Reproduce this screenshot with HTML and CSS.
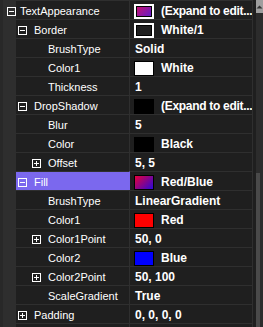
FILE: index.html
```html
<!DOCTYPE html>
<html lang="en">

<head>
    <meta charset="UTF-8">
    <meta name="viewport" content="width=device-width, initial-scale=1.0">
    <title>Property Grid</title>
    <link rel="stylesheet" href="styles.css">
</head>

<body>
    <div class="pane">
        <div class="list">
            <div class="row">
                <div class="gutter"><svg class="exp" width="9" height="9"><rect x="0.5" y="0.5" width="8" height="8" fill="none" stroke="#fff"/><path d="M2 4.5h5" stroke="#fff"/></svg></div>
                <div class="name l0">TextAppearance</div>
                <div class="value"><span class="sw frame grad-a"></span><span class="txt tight">(Expand to edit...</span></div>
            </div>
            <div class="row">
                <div class="gutter"></div>
                <div class="name l1"><svg class="exp" width="9" height="9"><rect x="0.5" y="0.5" width="8" height="8" fill="none" stroke="#fff"/><path d="M2 4.5h5" stroke="#fff"/></svg>Border</div>
                <div class="value"><span class="sw frame dark"></span><span class="txt">White/1</span></div>
            </div>
            <div class="row">
                <div class="gutter"></div>
                <div class="name l2">BrushType</div>
                <div class="value plain">Solid</div>
            </div>
            <div class="row">
                <div class="gutter"></div>
                <div class="name l2">Color1</div>
                <div class="value"><span class="sw white"></span><span class="txt">White</span></div>
            </div>
            <div class="row">
                <div class="gutter"></div>
                <div class="name l2">Thickness</div>
                <div class="value plain">1</div>
            </div>
            <div class="row">
                <div class="gutter"></div>
                <div class="name l1"><svg class="exp" width="9" height="9"><rect x="0.5" y="0.5" width="8" height="8" fill="none" stroke="#fff"/><path d="M2 4.5h5" stroke="#fff"/></svg>DropShadow</div>
                <div class="value"><span class="sw black"></span><span class="txt tight">(Expand to edit...</span></div>
            </div>
            <div class="row">
                <div class="gutter"></div>
                <div class="name l2">Blur</div>
                <div class="value plain">5</div>
            </div>
            <div class="row">
                <div class="gutter"></div>
                <div class="name l2">Color</div>
                <div class="value"><span class="sw black"></span><span class="txt">Black</span></div>
            </div>
            <div class="row">
                <div class="gutter"></div>
                <div class="name l2"><svg class="exp" width="9" height="9"><rect x="0.5" y="0.5" width="8" height="8" fill="none" stroke="#fff"/><path d="M2 4.5h5M4.5 2v5" stroke="#fff"/></svg>Offset</div>
                <div class="value plain">5, 5</div>
            </div>
            <div class="row selected">
                <div class="gutter"></div>
                <div class="name l1"><svg class="exp" width="9" height="9"><rect x="0.5" y="0.5" width="8" height="8" fill="none" stroke="#fff"/><path d="M2 4.5h5" stroke="#fff"/></svg>Fill</div>
                <div class="value"><span class="sw grad-b"></span><span class="txt">Red/Blue</span></div>
            </div>
            <div class="row">
                <div class="gutter"></div>
                <div class="name l2">BrushType</div>
                <div class="value plain">LinearGradient</div>
            </div>
            <div class="row">
                <div class="gutter"></div>
                <div class="name l2">Color1</div>
                <div class="value"><span class="sw red"></span><span class="txt">Red</span></div>
            </div>
            <div class="row">
                <div class="gutter"></div>
                <div class="name l2"><svg class="exp" width="9" height="9"><rect x="0.5" y="0.5" width="8" height="8" fill="none" stroke="#fff"/><path d="M2 4.5h5M4.5 2v5" stroke="#fff"/></svg>Color1Point</div>
                <div class="value plain">50, 0</div>
            </div>
            <div class="row">
                <div class="gutter"></div>
                <div class="name l2">Color2</div>
                <div class="value"><span class="sw blue"></span><span class="txt">Blue</span></div>
            </div>
            <div class="row">
                <div class="gutter"></div>
                <div class="name l2"><svg class="exp" width="9" height="9"><rect x="0.5" y="0.5" width="8" height="8" fill="none" stroke="#fff"/><path d="M2 4.5h5M4.5 2v5" stroke="#fff"/></svg>Color2Point</div>
                <div class="value plain">50, 100</div>
            </div>
            <div class="row">
                <div class="gutter"></div>
                <div class="name l2">ScaleGradient</div>
                <div class="value plain">True</div>
            </div>
            <div class="row">
                <div class="gutter"></div>
                <div class="name l1"><svg class="exp" width="9" height="9"><rect x="0.5" y="0.5" width="8" height="8" fill="none" stroke="#fff"/><path d="M2 4.5h5M4.5 2v5" stroke="#fff"/></svg>Padding</div>
                <div class="value plain">0, 0, 0, 0</div>
            </div>
            <div class="row">
                <div class="gutter"></div>
                <div class="name l1"></div>
                <div class="value plain"></div>
            </div>
        </div>
        <div class="scrollbar">
            <div class="arrow"><svg width="7" height="5"><path d="M0.5 4.5L3.5 1.5L6.5 4.5Z" fill="#333"/></svg></div>
            <div class="track"></div>
            <div class="thumb"></div>
        </div>
    </div>
</body>

</html>
```

FILE: styles.css
```css
body {
    margin: 0;
    padding: 0;
    background-color: #1f1f1f;
    font-family: "Liberation Sans", Arial, sans-serif;
    color: #ffffff;
    overflow: hidden;
}

.pane {
    display: flex;
    width: 263px;
    height: 327px;
    overflow: hidden;
}

.list {
    width: 256px;
    display: flex;
    flex-direction: column;
}

.row {
    display: flex;
    height: 19px;
    flex-shrink: 0;
}

.gutter {
    width: 16px;
    border-left: 3px solid #282828;
    background-color: #2e2e2e;
    display: flex;
    align-items: center;
    padding-top: 1px;
    box-sizing: border-box;
}

.gutter .exp {
    margin-left: 4px;
    margin-top: 2px;
}

.name {
    width: 113px;
    box-sizing: border-box;
    border-top: 1px solid #2f2f2f;
    background-color: #1f1f1f;
    display: flex;
    align-items: center;
    padding-top: 2px;
    font-size: 11px;
    line-height: 16px;
    white-space: nowrap;
    overflow: hidden;
}

.name .exp {
    margin-left: -16px;
    margin-right: 7px;
    flex-shrink: 0;
}

.l0 {
    padding-left: 4px;
}

.l1 {
    padding-left: 18px;
}

.l2 {
    padding-left: 32px;
}

.selected .name {
    background-color: #7b68ee;
}

.selected .value {
    border-left-color: #7b68ee;
}

.value {
    width: 124px;
    box-sizing: border-box;
    border-top: 1px solid #2f2f2f;
    border-left: 1px solid #2f2f2f;
    border-right: 1px solid #2f2f2f;
    background-color: #1f1f1f;
    display: flex;
    align-items: center;
    padding-top: 2px;
    padding-left: 4px;
    font-size: 12px;
    font-weight: bold;
    line-height: 16px;
    white-space: nowrap;
    overflow: hidden;
}

.value.plain {
    padding-left: 5px;
}

.txt {
    margin-left: 7px;
}

.tight {
    letter-spacing: -0.3px;
}

/* color previews */
.sw {
    width: 20px;
    height: 15px;
    box-sizing: border-box;
    border: 1px solid #000;
    flex-shrink: 0;
}

.sw.frame {
    border: 2px solid #fff;
    box-shadow: inset 0 0 0 1px #000;
}

.grad-a {
    background: linear-gradient(135deg, #d0106a, #5a1ed0);
}

.grad-b {
    background: linear-gradient(135deg, #e8003a, #2a08d8);
}

.dark {
    background-color: #1f1f1f;
}

.white {
    background-color: #ffffff;
}

.black {
    background-color: #000000;
}

.red {
    background-color: #ff0000;
}

.blue {
    background-color: #0000ff;
}

.scrollbar {
    width: 7px;
    display: flex;
    flex-direction: column;
    background-color: #2c2c2c;
}

.arrow {
    height: 13px;
    background-color: #9e9e9e;
    display: flex;
    justify-content: center;
    align-items: center;
}

.track {
    height: 160px;
}

.thumb {
    flex: 1;
    width: 4px;
    background-color: #4a4a4a;
}
```
